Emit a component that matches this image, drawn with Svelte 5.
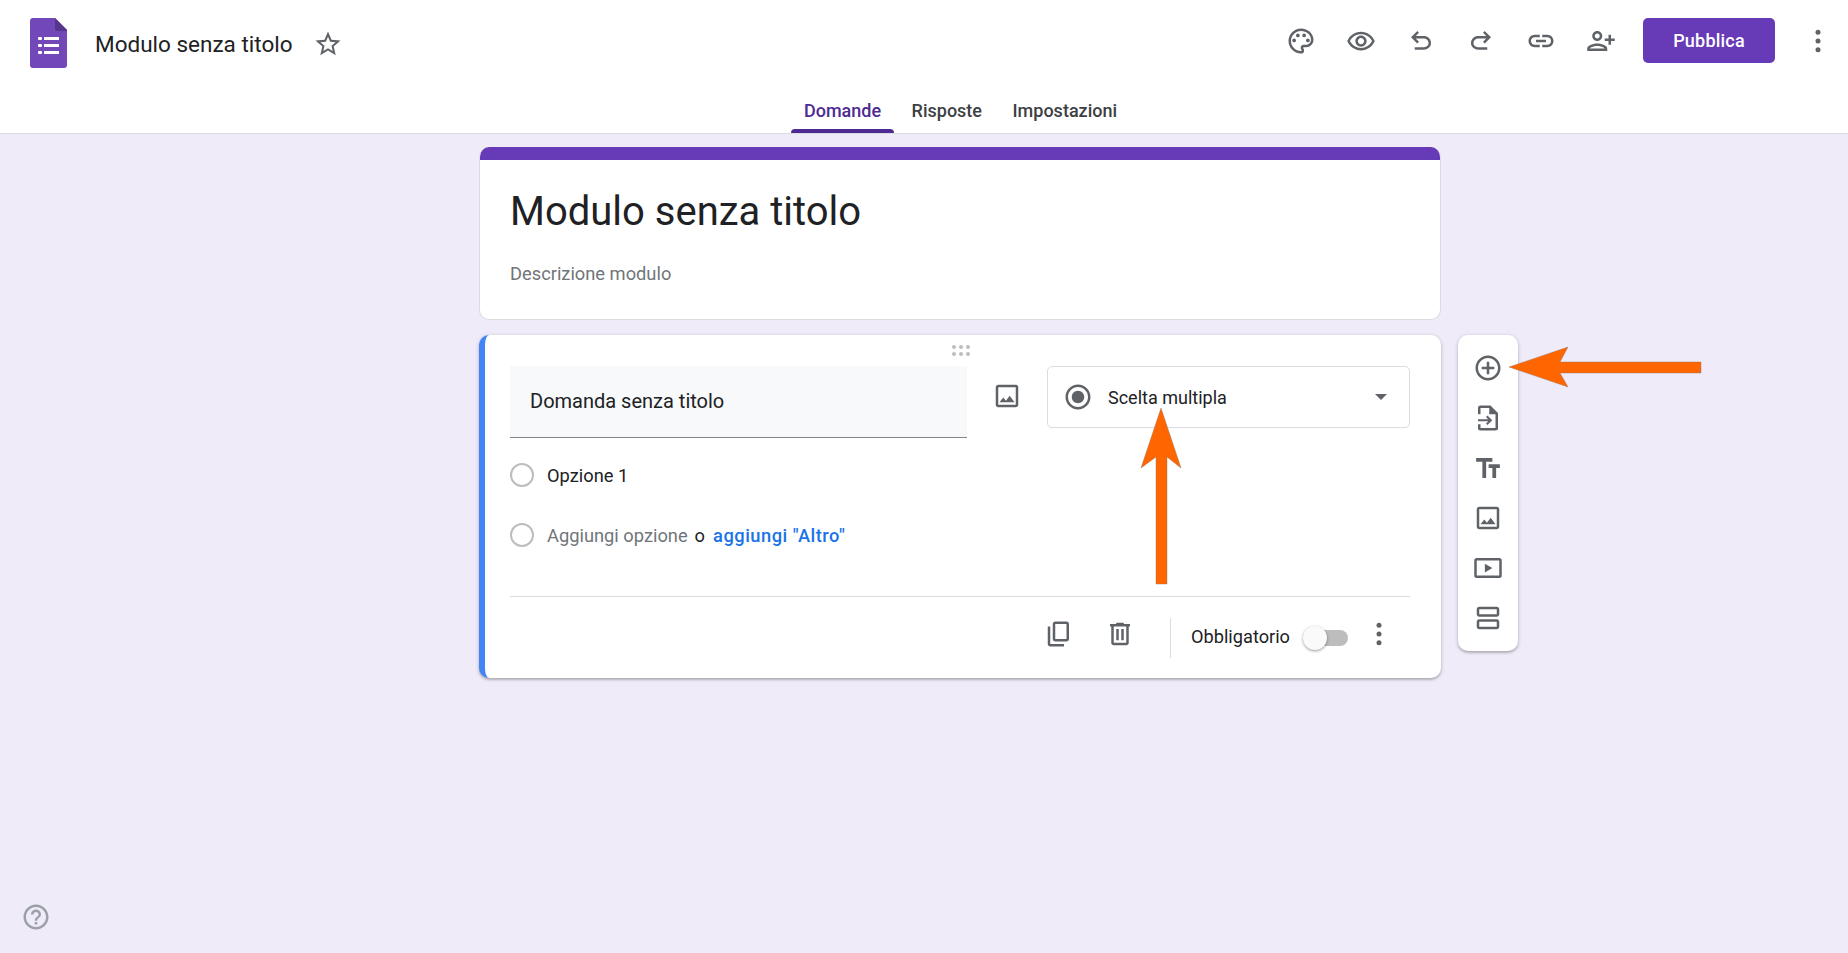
<script>
  const actions = [
    { id: 'palette', d: 'M12 22C6.49 22 2 17.51 2 12S6.49 2 12 2s10 4.04 10 9c0 3.31-2.69 6-6 6h-1.77c-.28 0-.5.22-.5.5 0 .12.05.23.13.33.41.47.64 1.06.64 1.67A2.5 2.5 0 0 1 12 22zm0-18c-4.41 0-8 3.59-8 8s3.59 8 8 8c.28 0 .5-.22.5-.5a.54.54 0 0 0-.14-.35c-.41-.46-.63-1.05-.63-1.65a2.5 2.5 0 0 1 2.5-2.5H16c2.21 0 4-1.79 4-4 0-3.86-3.59-7-8-7zM6.5 10a1.5 1.5 0 1 0 0 3 1.5 1.5 0 0 0 0-3zm3-4a1.5 1.5 0 1 0 0 3 1.5 1.5 0 0 0 0-3zm5 0a1.5 1.5 0 1 0 0 3 1.5 1.5 0 0 0 0-3zm3 4a1.5 1.5 0 1 0 0 3 1.5 1.5 0 0 0 0-3z' },
    { id: 'eye', d: 'M12 6.5c3.79 0 7.17 2.13 8.82 5.5-1.65 3.37-5.02 5.5-8.82 5.5S4.83 15.37 3.18 12C4.83 8.63 8.21 6.5 12 6.5m0-2C7 4.5 2.73 7.61 1 12c1.73 4.39 6 7.5 11 7.5s9.27-3.11 11-7.5c-1.73-4.39-6-7.5-11-7.5zm0 5c1.38 0 2.5 1.12 2.5 2.5s-1.12 2.5-2.5 2.5-2.5-1.12-2.5-2.5 1.12-2.5 2.5-2.5m0-2c-2.48 0-4.5 2.02-4.5 4.5s2.02 4.5 4.5 4.5 4.5-2.02 4.5-4.5-2.02-4.5-4.5-4.5z' },
    { id: 'undo', d: 'M7 19v-2h7.1c1.05 0 1.96-.33 2.74-1 .77-.67 1.16-1.5 1.16-2.5s-.39-1.83-1.16-2.5c-.78-.67-1.69-1-2.74-1H7.8l2.6 2.6L9 14 4 9l5-5 1.4 1.4L7.8 8h6.3c1.62 0 3 .53 4.16 1.58C19.42 10.63 20 11.94 20 13.5s-.58 2.87-1.74 3.93C17.1 18.48 15.72 19 14.1 19z' },
    { id: 'redo', flip: true, d: 'M7 19v-2h7.1c1.05 0 1.96-.33 2.74-1 .77-.67 1.16-1.5 1.16-2.5s-.39-1.83-1.16-2.5c-.78-.67-1.69-1-2.74-1H7.8l2.6 2.6L9 14 4 9l5-5 1.4 1.4L7.8 8h6.3c1.62 0 3 .53 4.16 1.58C19.42 10.63 20 11.94 20 13.5s-.58 2.87-1.74 3.93C17.1 18.48 15.72 19 14.1 19z' },
    { id: 'link', d: 'M17 7h-4v2h4c1.65 0 3 1.35 3 3s-1.35 3-3 3h-4v2h4c2.76 0 5-2.24 5-5s-2.24-5-5-5zm-6 8H7c-1.65 0-3-1.35-3-3s1.35-3 3-3h4V7H7c-2.76 0-5 2.24-5 5s2.24 5 5 5h4v-2zm-3-4h8v2H8z' },
    { id: 'person', flip: true, d: 'M15 12c2.21 0 4-1.79 4-4s-1.79-4-4-4-4 1.79-4 4 1.79 4 4 4zm0-6c1.1 0 2 .9 2 2s-.9 2-2 2-2-.9-2-2 .9-2 2-2zm0 8c-2.67 0-8 1.34-8 4v2h16v-2c0-2.66-5.33-4-8-4zm-6 4c.22-.72 3.31-2 6-2 2.7 0 5.8 1.29 6 2H9zm-3-3v-3h3v-2H6V7H4v3H1v2h3v3h2z' }
  ];
  const tools = [
    'M13 7h-2v4H7v2h4v4h2v-4h4v-2h-4V7zm-1-5C6.48 2 2 6.48 2 12s4.48 10 10 10 10-4.48 10-10S17.52 2 12 2zm0 18c-4.41 0-8-3.59-8-8s3.59-8 8-8 8 3.59 8 8-3.59 8-8 8z',
    'M6 2h8l6 6v12a2 2 0 0 1-2 2H6a2 2 0 0 1-2-2v-3h2v3h12V9h-5V4H6v5H4V4a2 2 0 0 1 2-2zM4 13h8.2l-1.8-1.8 1.2-1.2 3.8 3.8-3.8 3.8-1.2-1.2 1.8-1.8H4z',
    'M2.5 4v3h5v13h3V7h5V4zm19 5h-9v3h3v8h3v-8h3V9z',
    'M19 5v14H5V5h14m0-2H5c-1.1 0-2 .9-2 2v14c0 1.1.9 2 2 2h14c1.1 0 2-.9 2-2V5c0-1.1-.9-2-2-2zm-4.86 8.86l-3 3.87L9 13.14 6 17h12l-3.86-5.14z',
    'M21 4H3a2 2 0 0 0-2 2v12a2 2 0 0 0 2 2h18a2 2 0 0 0 2-2V6a2 2 0 0 0-2-2zm0 14H3V6h18v12zM9.5 8.5v7l6-3.5z',
    'M19 13H5c-1.1 0-2 .9-2 2v4c0 1.1.9 2 2 2h14c1.1 0 2-.9 2-2v-4c0-1.1-.9-2-2-2zm0 6H5v-4h14v4zM19 3H5c-1.1 0-2 .9-2 2v4c0 1.1.9 2 2 2h14c1.1 0 2-.9 2-2V5c0-1.1-.9-2-2-2zm0 6H5V5h14v4z'
  ];
  const imageIcon = tools[3];
</script>

<div class="page">
  <header class="header">
    <div class="top">
      <svg class="doc" viewBox="0 0 37 50" aria-hidden="true">
        <path fill="#7248b9" d="M3 0h22l12 12v35a3 3 0 0 1-3 3H3a3 3 0 0 1-3-3V3a3 3 0 0 1 3-3z" />
        <path fill="#56358f" d="M25 0l12 12v1H27a2 2 0 0 1-2-2z" />
        <g fill="#fff">
          <rect x="8" y="19" width="4" height="3" rx="1" /><rect x="14" y="19" width="15" height="3" />
          <rect x="8" y="26" width="4" height="3" rx="1" /><rect x="14" y="26" width="15" height="3" />
          <rect x="8" y="33" width="4" height="3" rx="1" /><rect x="14" y="33" width="15" height="3" />
        </g>
      </svg>
      <span class="doc-title">Modulo senza titolo</span>
      <svg class="icon star" viewBox="0 0 24 24" aria-hidden="true"><path d="M22 9.24l-7.19-.62L12 2 9.19 8.63 2 9.24l5.46 4.73L5.82 21 12 17.27 18.18 21l-1.63-7.03L22 9.24zM12 15.4l-3.76 2.27 1-4.28-3.32-2.88 4.38-.38L12 6.1l1.71 4.04 4.38.38-3.32 2.88 1 4.28L12 15.4z" /></svg>
      <div class="actions">
        {#each actions as a}
          <span class="action">
            <svg class="icon" class:flip={a.flip} viewBox="0 0 24 24" aria-hidden="true"><path d={a.d} /></svg>
          </span>
        {/each}
        <button class="publish" type="button">Pubblica</button>
        <svg class="icon more" viewBox="0 0 24 24" aria-hidden="true"><circle cx="12" cy="5" r="2" /><circle cx="12" cy="12" r="2" /><circle cx="12" cy="19" r="2" /></svg>
      </div>
    </div>
    <nav class="tabs">
      <span class="tab active">Domande</span>
      <span class="tab">Risposte</span>
      <span class="tab">Impostazioni</span>
    </nav>
  </header>

  <main class="main">
    <div class="column">
      <section class="card title-card">
        <div class="band"></div>
        <div class="title-body">
          <h1>Modulo senza titolo</h1>
          <p>Descrizione modulo</p>
        </div>
      </section>

      <section class="card question">
        <div class="drag" aria-hidden="true">
          {#each Array(6) as _}<i></i>{/each}
        </div>
        <div class="q-row">
          <div class="q-input">Domanda senza titolo</div>
          <svg class="icon q-image" viewBox="0 0 24 24" aria-hidden="true"><path d={imageIcon} /></svg>
          <div class="select">
            <svg class="icon" viewBox="0 0 24 24" aria-hidden="true"><path d="M12 7c-2.76 0-5 2.24-5 5s2.24 5 5 5 5-2.24 5-5-2.24-5-5-5zm0-5C6.48 2 2 6.48 2 12s4.48 10 10 10 10-4.48 10-10S17.52 2 12 2zm0 18c-4.42 0-8-3.58-8-8s3.58-8 8-8 8 3.58 8 8-3.58 8-8 8z" /></svg>
            <span class="select-label">Scelta multipla</span>
            <span class="caret"></span>
          </div>
        </div>
        <div class="option first"><span class="radio"></span><span>Opzione 1</span></div>
        <div class="option second">
          <span class="radio"></span><span class="muted">Aggiungi opzione</span><span class="or">o</span><span class="other">aggiungi "Altro"</span>
        </div>
        <div class="footer">
          <svg class="icon raised" viewBox="0 0 24 24" aria-hidden="true"><path d="M9 18c-.55 0-1.02-.2-1.41-.59C7.2 17.02 7 16.55 7 16V4c0-.55.2-1.02.59-1.41C7.98 2.2 8.45 2 9 2h9c.55 0 1.02.2 1.41.59.39.39.59.86.59 1.41v12c0 .55-.2 1.02-.59 1.41-.39.39-.86.59-1.41.59H9zm0-2h9V4H9v12zm-4 6c-.55 0-1.02-.2-1.41-.59C3.2 21.02 3 20.55 3 20V6h2v14h11v2H5z" /></svg>
          <svg class="icon raised trash" viewBox="0 0 24 24" aria-hidden="true"><path d="M15 4V3H9v1H4v2h1v13c0 1.1.9 2 2 2h10c1.1 0 2-.9 2-2V6h1V4h-5zm2 15H7V6h10v13zM9 8h2v9H9zm4 0h2v9h-2z" /></svg>
          <span class="vline"></span>
          <span class="required">Obbligatorio</span>
          <span class="toggle"><span class="knob"></span></span>
          <svg class="icon raised q-more" viewBox="0 0 24 24" aria-hidden="true"><circle cx="12" cy="5" r="2" /><circle cx="12" cy="12" r="2" /><circle cx="12" cy="19" r="2" /></svg>
        </div>
      </section>
    </div>

    <aside class="toolbar">
      {#each tools as d}
        <svg class="icon" viewBox="0 0 24 24" aria-hidden="true"><path {d} /></svg>
      {/each}
    </aside>
  </main>

  <svg class="help" viewBox="0 0 24 24" aria-hidden="true"><path d="M11 18h2v-2h-2v2zm1-16C6.48 2 2 6.48 2 12s4.48 10 10 10 10-4.48 10-10S17.52 2 12 2zm0 18c-4.41 0-8-3.59-8-8s3.59-8 8-8 8 3.59 8 8-3.59 8-8 8zm0-14c-2.21 0-4 1.79-4 4h2c0-1.1.9-2 2-2s2 .9 2 2c0 2-3 1.75-3 5h2c0-2.25 3-2.5 3-5 0-2.21-1.79-4-4-4z" /></svg>

  <svg class="overlay" width="1848" height="953" viewBox="0 0 1848 953" aria-hidden="true">
    <path class="arrow" d="M1161 408L1181 468L1167 457V584H1156V457L1141 468Z" />
    <path class="arrow" d="M1509 367L1568 347L1560 362H1701V373H1560L1568 387Z" />
  </svg>
</div>

<style>
  :global(body) {
    margin: 0;
    background: #f0ebf8;
    font-family: Roboto, "Liberation Sans", sans-serif;
    color: #202124;
  }
  .page {
    position: relative;
    height: 953px;
    overflow: hidden;
    background: #f0ebf8;
  }
  .icon {
    display: block;
    width: 30px;
    height: 30px;
    fill: #5f6368;
    flex: none;
  }
  .flip { transform: scaleX(-1); }

  .header {
    height: 134px;
    box-sizing: border-box;
    background: #fff;
    border-bottom: 1px solid #dadce0;
  }
  .top {
    display: flex;
    align-items: center;
    height: 88px;
    padding: 0 15px 0 30px;
  }
  .doc { width: 37px; height: 50px; flex: none; margin-top: -2px; }
  .doc-title {
    margin-left: 28px;
    font-size: 22.5px;
    color: #202124;
  }
  .star { margin-left: 20px; }
  .actions {
    margin-left: auto;
    margin-bottom: 7px;
    display: flex;
    align-items: center;
  }
  .action {
    width: 60px;
    display: flex;
    justify-content: center;
  }
  .publish {
    margin-left: 12px;
    width: 132px;
    height: 45px;
    border: 0;
    border-radius: 5px;
    background: #673ab7;
    color: #fff;
    font: 500 18px Roboto, sans-serif;
    letter-spacing: .2px;
  }
  .more { margin-left: 28px; }
  .tabs {
    display: flex;
    justify-content: center;
    gap: 5.5px;
    height: 45px;
    padding-left: 73px;
  }
  .tab {
    position: relative;
    box-sizing: border-box;
    padding: 12px 12.5px 0;
    height: 45px;
    font-size: 18px;
    font-weight: 500;
    color: #3c4043;
  }
  .tab.active { color: #4d2a94; }
  .tab.active::after {
    content: "";
    position: absolute;
    left: 0;
    right: 0;
    bottom: 0;
    height: 4px;
    border-radius: 4px 4px 0 0;
    background: #4d2a94;
  }

  .main {
    display: flex;
    align-items: flex-start;
    gap: 17px;
    padding: 13px 0 0 479px;
  }
  .column {
    width: 962px;
    display: flex;
    flex-direction: column;
    gap: 15px;
  }
  .card {
    background: #fff;
    border-radius: 10px;
    box-sizing: border-box;
  }
  .title-card {
    height: 173px;
    border: 1px solid #dadce0;
    border-top: 0;
    overflow: hidden;
  }
  .band { height: 13px; margin: 0 -1px; background: #673ab7; }
  .title-body { padding: 0 30px; }
  h1 {
    margin: 27px 0 0;
    font-size: 40px;
    line-height: 50px;
    font-weight: 400;
    color: #202124;
  }
  p {
    margin: 25px 0 0;
    font-size: 18.3px;
    line-height: 24px;
    color: #70757a;
  }

  .question {
    position: relative;
    height: 343px;
    padding: 31px 30px 0 25px;
    border-left: 6px solid #4285f4;
    box-shadow: 0 2px 2px rgba(0,0,0,.14), 0 1px 4px rgba(0,0,0,.2);
  }
  .drag {
    position: absolute;
    top: 10px;
    left: 467px;
    display: grid;
    grid-template-columns: repeat(3, 4px);
    gap: 3px;
  }
  .drag i { width: 4px; height: 4px; border-radius: 50%; background: #bdbdbd; }
  .q-row { display: flex; align-items: flex-start; }
  .q-input {
    box-sizing: border-box;
    width: 457px;
    height: 72px;
    padding: 23px 20px 0;
    background: #f8f9fa;
    border-bottom: 1px solid #80868b;
    font-size: 20px;
    line-height: 24px;
    color: #202124;
  }
  .q-image { margin: 15px 0 0 25px; }
  .select {
    box-sizing: border-box;
    display: flex;
    align-items: center;
    width: 363px;
    height: 62px;
    margin-left: 25px;
    padding: 0 22px 0 15px;
    border: 1px solid #dadce0;
    border-radius: 5px;
  }
  .select-label { margin-left: 15px; font-size: 18px; color: #202124; }
  .caret {
    margin-left: auto;
    width: 0;
    height: 0;
    border-left: 6px solid transparent;
    border-right: 6px solid transparent;
    border-top: 6px solid #5f6368;
  }
  .option {
    display: flex;
    align-items: center;
    height: 30px;
    font-size: 18.3px;
    color: #202124;
  }
  .option.first { margin-top: 22px; }
  .option.second { margin-top: 30px; }
  .radio {
    box-sizing: border-box;
    width: 24px;
    height: 24px;
    margin-right: 13px;
    border: 2px solid #bdbdbd;
    border-radius: 50%;
  }
  .muted { color: #70757a; }
  .or { margin-left: 7px; }
  .other { margin-left: 8px; color: #1a73e8; font-weight: 500; letter-spacing: .5px; }
  .footer {
    display: flex;
    align-items: center;
    height: 81px;
    margin-top: 46px;
    margin-right: 1px;
    border-top: 1px solid #dadce0;
    padding-left: 534px;
  }
  .raised { margin-bottom: 7px; }
  .trash { margin-left: 31px; }
  .vline { width: 1px; height: 40px; margin-left: 35px; background: #dadce0; }
  .required { margin-left: 20px; margin-bottom: 3px; font-size: 18.2px; color: #202124; }
  .toggle {
    position: relative;
    width: 43px;
    height: 16px;
    margin-left: 15px;
    border-radius: 8px;
    background: #bdbdbd;
  }
  .knob {
    position: absolute;
    left: -2px;
    top: -4px;
    width: 24px;
    height: 24px;
    border-radius: 50%;
    background: #fafafa;
    box-shadow: 0 1px 3px rgba(0,0,0,.4);
  }
  .q-more { margin-left: 16px; }

  .toolbar {
    width: 60px;
    height: 316px;
    box-sizing: border-box;
    margin-top: 188px;
    padding: 18px 0;
    display: flex;
    flex-direction: column;
    align-items: center;
    gap: 20px;
    background: #fff;
    border-radius: 10px;
    box-shadow: 0 2px 2px rgba(0,0,0,.14), 0 1px 4px rgba(0,0,0,.2);
  }

  .help {
    position: absolute;
    left: 21px;
    top: 902px;
    width: 30px;
    height: 30px;
    fill: #9aa0a6;
  }
  .overlay { position: absolute; left: 0; top: 0; pointer-events: none; }
  .arrow { fill: #ff6600; stroke: #8a6f60; stroke-width: .4; }
</style>
